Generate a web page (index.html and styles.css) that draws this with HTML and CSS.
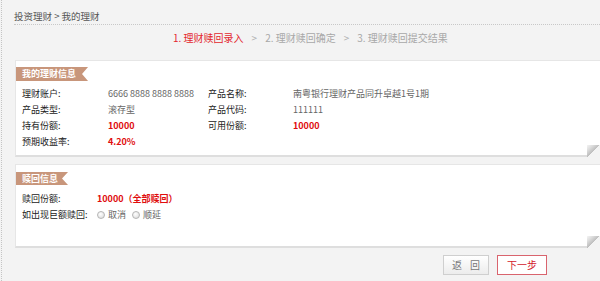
FILE: index.html
```html
<!DOCTYPE html>
<html lang="zh-CN">
<head>
<meta charset="utf-8">
<title>我的理财</title>
<link rel="stylesheet" href="styles.css">
</head>
<body>
<div class="page">
  <div class="crumb">投资理财 &gt; 我的理财</div>
  <div class="steps">
    <span class="step active">1. 理财赎回录入</span>
    <span class="sep">&gt;</span>
    <span class="step">2. 理财赎回确定</span>
    <span class="sep">&gt;</span>
    <span class="step">3. 理财赎回提交结果</span>
  </div>

  <div class="panel panel-info">
    <div class="tag">我的理财信息</div>
    <div class="grid grid4">
      <span class="lb">理财账户:</span><span class="val">6666 8888 8888 8888</span>
      <span class="lb">产品名称:</span><span class="val">南粤银行理财产品同升卓越1号1期</span>
      <span class="lb">产品类型:</span><span class="val">滚存型</span>
      <span class="lb">产品代码:</span><span class="val">111111</span>
      <span class="lb">持有份额:</span><span class="val red">10000</span>
      <span class="lb">可用份额:</span><span class="val red">10000</span>
      <span class="lb">预期收益率:</span><span class="val red">4.20%</span>
    </div>
    <span class="fold"></span>
  </div>

  <div class="panel panel-redeem">
    <div class="tag">赎回信息</div>
    <div class="grid grid2">
      <span class="lb">赎回份额:</span><span class="val red">10000（全部赎回）</span>
      <span class="lb">如出现巨额赎回:</span>
      <span class="val radios">
        <label class="radio"><span class="dot"></span>取消</label>
        <label class="radio"><span class="dot"></span>顺延</label>
      </span>
    </div>
    <span class="fold"></span>
  </div>

  <div class="actions">
    <button class="btn btn-back">返 回</button>
    <button class="btn btn-next">下一步</button>
  </div>
</div>
</body>
</html>
```

FILE: styles.css
```css
* { box-sizing: border-box; }
html, body {
  margin: 0;
  padding: 0;
  background: #f3f3f3;
}
body {
  font-family: "Noto Sans CJK SC", "Noto Sans", sans-serif;
  font-size: 9px;
  color: #222;
  width: 600px;
  height: 281px;
  overflow: hidden;
}
.page {
  margin-left: 1px;
  border-left: 1px dotted #c4c4c4;
  height: 281px;
  padding-left: 12px;
}
.crumb {
  font-size: 9.5px;
  line-height: 14px;
  padding-top: 9px;
  padding-bottom: 1px;
  color: #555;
  border-bottom: 1px dotted #c8c8c8;
}
.steps {
  display: flex;
  align-items: center;
  margin-top: 6px;
  padding-left: 159px;
  font-size: 10px;
  line-height: 14px;
  color: #a8a8a8;
}
.step.active { color: #e3272d; }
.sep { margin: 0 8px 0 8px; color: #b0b0b0; }

.panel {
  position: relative;
  margin-left: 1px;
  background: #fff;
  border: 1px solid #e6e6e6;
  border-right: 0;
  border-bottom: 2px solid #dedede;
}
.panel-info {
  margin-top: 15px;
  padding: 6px 0 5px 0;
}
.panel-redeem {
  margin-top: 7px;
  padding: 7px 0 23px 0;
}
.tag {
  display: inline-block;
  height: 14px;
  line-height: 14px;
  padding: 0 12px 0 6px;
  background: #c8967b;
  color: #fff;
  font-weight: bold;
  clip-path: polygon(0 0, 100% 0, calc(100% - 6px) 50%, 100% 100%, 0 100%);
  vertical-align: top;
}
.panel-redeem .tag { height: 13px; line-height: 13px; padding-right: 10px; }

.grid {
  display: grid;
  padding-left: 6px;
  line-height: 16px;
}
.panel-info .grid { margin-top: 5px; }
.panel-redeem .grid { margin-top: 6px; }
.grid4 { grid-template-columns: 86px 100px 85px 1fr; }
.grid2 { grid-template-columns: 75px 1fr; }
.lb { color: #222; }
.val { color: #666; }
.red { color: #e00d0d; font-weight: bold; }

.radios { display: flex; align-items: center; }
.radio {
  display: inline-flex;
  align-items: center;
  margin-right: 6px;
  color: #666;
}
.dot {
  width: 8px;
  height: 8px;
  border-radius: 50%;
  border: 1px solid #b5b5b5;
  background: radial-gradient(circle at 40% 35%, #fff 0, #e8e8e8 60%, #d4d4d4 100%);
  margin-right: 3px;
}

.fold {
  position: absolute;
  right: 0;
  bottom: -2px;
  width: 13px;
  height: 12px;
  background: linear-gradient(to top left, #f3f3f3 0, #f3f3f3 50%, #bdbdbd 50%, #dcdcdc 75%, #f4f4f4 100%);
}

.actions {
  display: flex;
  justify-content: flex-end;
  gap: 8px;
  margin-top: 7px;
  padding-right: 53px;
}
.btn {
  height: 20px;
  padding: 0;
  font-family: "Noto Sans CJK SC", "Noto Sans", sans-serif;
  font-size: 10px;
  line-height: 18px;
  cursor: pointer;
}
.btn-back {
  width: 46px;
  border: 1px solid #cfcfcf;
  background: linear-gradient(#ffffff, #ececec);
  color: #777;
  letter-spacing: 3px;
  text-indent: 3px;
}
.btn-next {
  width: 50px;
  border: 1px solid #d9646e;
  background: #fff;
  color: #d3202c;
}
```
